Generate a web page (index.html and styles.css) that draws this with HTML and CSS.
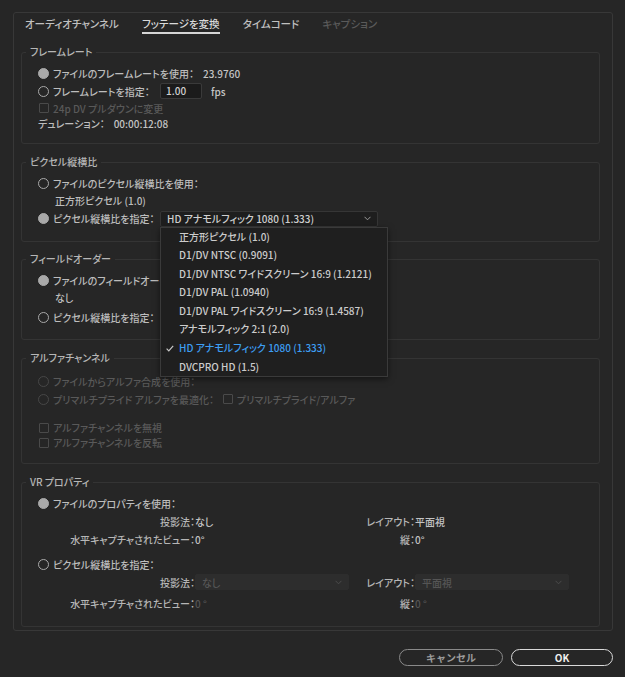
FILE: index.html
```html
<!DOCTYPE html>
<html lang="ja">
<head>
<meta charset="utf-8">
<title>クリップを変換</title>
<link rel="stylesheet" href="styles.css">
</head>
<body>
<div class="dialog">
  <div class="panel">
    <div class="tabs">
      <span class="tab">オーディオチャンネル</span>
      <span class="tab active">フッテージを変換</span>
      <span class="tab">タイムコード</span>
      <span class="tab off">キャプション</span>
    </div>

    <fieldset class="group">
      <legend>フレームレート</legend>
      <div class="rows frame">
        <div class="row h18"><span class="radio on"></span><span>ファイルのフレームレートを使用：</span><span class="val">23.9760</span></div>
        <div class="row h18"><span class="radio"></span><span class="lbl">フレームレートを指定：</span><span class="input">1.00</span><span class="unit">fps</span></div>
        <div class="row h16 dim"><span class="check"></span><span>24p DV プルダウンに変更</span></div>
        <div class="row h15"><span>デュレーション：</span><span class="val">00:00:12:08</span></div>
      </div>
    </fieldset>

    <fieldset class="group">
      <legend>ピクセル縦横比</legend>
      <div class="rows pixel">
        <div class="row h18"><span class="radio"></span><span>ファイルのピクセル縦横比を使用：</span></div>
        <div class="row h17 sub"><span>正方形ピクセル (1.0)</span></div>
        <div class="row h19"><span class="radio on"></span><span class="lbl">ピクセル縦横比を指定：</span>
          <div class="picker">
            <div class="select">
              <span>HD アナモルフィック 1080 (1.333)</span>
              <svg class="chev" width="7" height="5" viewBox="0 0 7 5"><polyline points="0.5,0.8 3.5,3.8 6.5,0.8" fill="none" stroke="#9a9a9a" stroke-width="1"/></svg>
            </div>
            <ul class="menu">
              <li>正方形ピクセル (1.0)</li>
              <li>D1/DV NTSC (0.9091)</li>
              <li>D1/DV NTSC ワイドスクリーン 16:9 (1.2121)</li>
              <li>D1/DV PAL (1.0940)</li>
              <li>D1/DV PAL ワイドスクリーン 16:9 (1.4587)</li>
              <li>アナモルフィック 2:1 (2.0)</li>
              <li class="picked"><svg class="tick" width="8" height="7" viewBox="0 0 8 7"><polyline points="0.6,3.6 2.8,5.8 7.2,0.8" fill="none" stroke="#c8c8c8" stroke-width="1.2"/></svg>HD アナモルフィック 1080 (1.333)</li>
              <li>DVCPRO HD (1.5)</li>
            </ul>
          </div>
        </div>
      </div>
    </fieldset>

    <fieldset class="group tight">
      <legend>フィールドオーダー</legend>
      <div class="rows field">
        <div class="row h18"><span class="radio on"></span><span>ファイルのフィールドオーダーを使用：</span></div>
        <div class="row h17 sub"><span>なし</span></div>
        <div class="row h23"><span class="radio"></span><span>ピクセル縦横比を指定：</span></div>
      </div>
    </fieldset>

    <fieldset class="group">
      <legend>アルファチャンネル</legend>
      <div class="rows alpha">
        <div class="row h18 dim"><span class="radio"></span><span>ファイルからアルファ合成を使用：</span></div>
        <div class="row h18 dim"><span class="radio"></span><span>プリマルチプライド アルファを最適化：</span><span class="check after"></span><span>プリマルチプライド/アルファ</span></div>
        <div class="row h15 dim gap"><span class="check"></span><span>アルファチャンネルを無視</span></div>
        <div class="row h15 dim"><span class="check"></span><span>アルファチャンネルを反転</span></div>
      </div>
    </fieldset>

    <fieldset class="group">
      <legend>VR プロパティ</legend>
      <div class="rows vr">
        <div class="row h18"><span class="radio on"></span><span>ファイルのプロパティを使用：</span></div>
        <div class="props">
          <span class="key">投影法：</span><span class="v">なし</span>
          <span class="key">レイアウト：</span><span class="v">平面視</span>
          <span class="key">水平キャプチャされたビュー：</span><span class="v">0°</span>
          <span class="key">縦：</span><span class="v">0°</span>
        </div>
        <div class="row h18 second"><span class="radio"></span><span>ピクセル縦横比を指定：</span></div>
        <div class="props off">
          <span class="key">投影法：</span>
          <div class="select flat"><span>なし</span><svg class="chev" width="7" height="5" viewBox="0 0 7 5"><polyline points="0.5,0.8 3.5,3.8 6.5,0.8" fill="none" stroke="#4c4c4c" stroke-width="1"/></svg></div>
          <span class="key">レイアウト：</span>
          <div class="select flat"><span>平面視</span><svg class="chev" width="7" height="5" viewBox="0 0 7 5"><polyline points="0.5,0.8 3.5,3.8 6.5,0.8" fill="none" stroke="#4c4c4c" stroke-width="1"/></svg></div>
          <span class="key">水平キャプチャされたビュー：</span><span class="v">0 °</span>
          <span class="key">縦：</span><span class="v">0 °</span>
        </div>
      </div>
    </fieldset>
  </div>

  <div class="buttons">
    <button class="btn cancel">キャンセル</button>
    <button class="btn ok">OK</button>
  </div>
</div>
</body>
</html>
```

FILE: styles.css
```css
html, body { margin: 0; background: #262626; }
body { font-family: "Noto Sans CJK JP", "Noto Sans", sans-serif; font-size: 10px; font-weight: 500; color: #bdbdbd; font-feature-settings: "palt"; }

.dialog { padding: 12px 12px 0 13px; }
.panel { box-sizing: border-box; width: 600px; height: 619px; border: 1px solid #383838; border-radius: 3px; }

.tabs { display: flex; gap: 23px; padding: 3px 0 0 11px; }
.tab { font-size: 10.5px; line-height: 16px; border-bottom: 2px solid transparent; color: #c0c0c0; }
.tab.active { color: #dadada; border-bottom-color: #d6d6d6; }
.tab.off { color: #5a5a5a; }

.group { margin: 10px 12px 0 7px; padding: 0 12px 0 8px; border: 1px solid #343434; border-radius: 3px; min-width: 0; }
.group.tight { margin-top: 9px; }
.group legend { padding: 0 4px; margin-left: -4px; line-height: 16px; color: #b6b6b6; }

.rows { margin-left: 8px; }
.frame { padding: 4px 0 12px; }
.pixel { padding: 4px 0 13px; }
.field { padding: 4px 0 10px; }
.alpha { padding: 6px 0 13px; }
.vr { padding: 4px 0 14px; }

.row { display: flex; align-items: center; white-space: nowrap; }
.h15 { height: 15px; }
.h16 { height: 16px; }
.h17 { height: 17px; }
.h18 { height: 18px; }
.h19 { height: 19px; }
.h23 { height: 23px; }
.row.gap { margin-top: 12px; }
.row.sub { padding-left: 17px; }
.row.dim { color: #595959; }

.radio { box-sizing: border-box; width: 11px; height: 11px; border: 1.5px solid #a9a9a9; border-radius: 50%; margin-right: 4px; flex: none; }
.radio.on { background: #a9a9a9; }
.dim .radio { border-color: #474747; }
.check { box-sizing: border-box; width: 10px; height: 10px; border: 1px solid #8a8a8a; border-radius: 1px; margin: 0 4px 0 1px; flex: none; }
.dim .check { border-color: #4a4a4a; }
.check.after { margin-left: 9px; }

.val { margin-left: 9px; color: #c4c4c4; }
.lbl { width: 107px; flex: none; }
.input { box-sizing: border-box; width: 42px; height: 16px; line-height: 14px; padding: 0 5px; background: #1b1b1b; border: 1px solid #3a3a3a; border-radius: 2px; color: #d0d0d0; }
.unit { margin-left: 9px; color: #c4c4c4; }

.picker { position: relative; }
.select { box-sizing: border-box; display: flex; align-items: center; justify-content: space-between; width: 218px; height: 16px; padding: 0 6px; background: #1e1e1e; border: 1px solid #363636; border-radius: 2px; color: #cfcfcf; }
.select.flat { width: 154px; background: #2d2d2d; border-color: #2d2d2d; color: #555555; }

.menu { position: absolute; top: 16px; left: 0; width: 228px; height: 150px; box-sizing: border-box; margin: 0; padding: 0; list-style: none; background: #1f1f1f; border: 1px solid #3a3a3a; box-shadow: 0 2px 6px rgba(0, 0, 0, 0.5); z-index: 2; }
.menu li { position: relative; height: 18.6px; line-height: 18.6px; padding-left: 18px; color: #cccccc; }
.menu li.picked { color: #3d9ef2; }
.tick { position: absolute; left: 5px; top: 6px; }

.props { display: grid; grid-template-columns: 157px 154px 66px 154px; grid-auto-rows: 18px; align-items: center; white-space: nowrap; }
.props .key { text-align: right; color: #b6b6b6; }
.props .v { color: #c2c2c2; }
.props .key:nth-child(5), .props .key:nth-child(7) { margin-top: 1px; }
.props.off { grid-template-rows: 18px 18px; row-gap: 3px; }
.props.off .v { color: #555555; }
.row.second { margin-top: 7px; }

.buttons { display: flex; justify-content: flex-end; gap: 8px; margin-top: 18px; }
.btn { box-sizing: border-box; height: 17px; padding: 0; border-radius: 9px; background: transparent; font-family: inherit; font-size: 10px; font-weight: bold; }
.btn.cancel { width: 104px; border: 1.5px solid #8a8a8a; color: #9c9c9c; }
.btn.ok { width: 102px; border: 1.5px solid #d9d9d9; color: #eeeeee; }
```
